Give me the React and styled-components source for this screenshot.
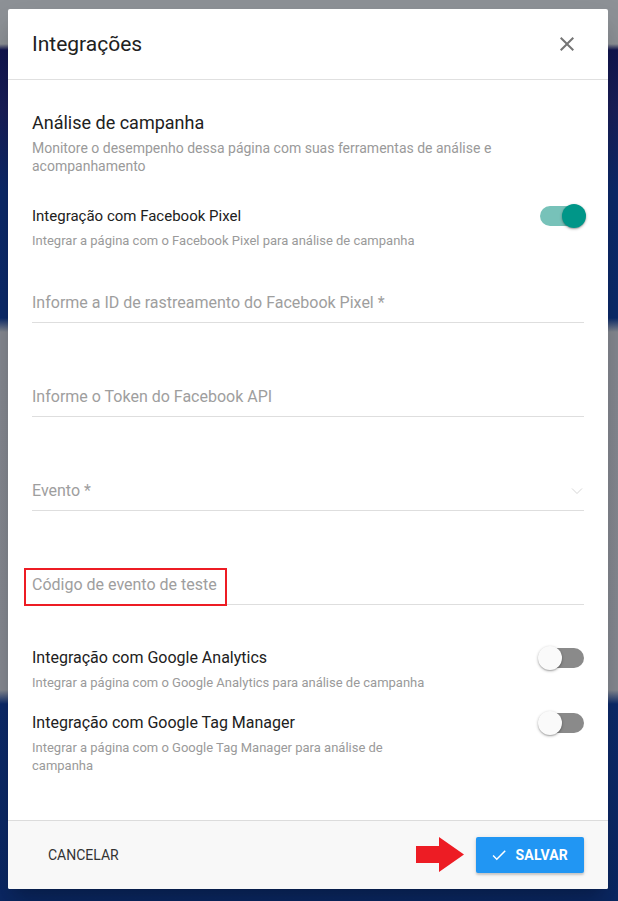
import React, { useState } from "react";
import styled, { createGlobalStyle } from "styled-components";

const GlobalStyle = createGlobalStyle`
  html, body {
    margin: 0;
    padding: 0;
  }
  body {
    font-family: Roboto, "Liberation Sans", Arial, sans-serif;
    min-height: 901px;
    background: linear-gradient(
      180deg,
      #8d9196 0px,
      #8d9196 44px,
      #121650 50px,
      #1a1f5a 110px,
      #0c2a6b 190px,
      #0c2b6c 318px,
      #868a92 332px,
      #878b93 690px,
      #0d2b6b 704px,
      #0b2864 901px
    );
  }
`;

const Page = styled.div`
  padding: 9px 8px 0 8px;
`;

const Modal = styled.div`
  width: 600px;
  background: #fff;
  border-radius: 2px;
  box-shadow: 0 11px 15px -7px rgba(0, 0, 0, 0.2), 0 24px 38px 3px rgba(0, 0, 0, 0.14);
  overflow: hidden;
  display: flex;
  flex-direction: column;
`;

const Header = styled.div`
  height: 70px;
  display: flex;
  align-items: center;
  justify-content: space-between;
  padding: 0 29px 0 24px;
  border-bottom: 1px solid #e0e0e0;
`;

const Title = styled.h2`
  margin: 0;
  font-size: 21px;
  font-weight: 400;
  color: #212121;
`;

const CloseButton = styled.button`
  border: 0;
  background: none;
  padding: 0;
  width: 24px;
  height: 24px;
  display: flex;
  cursor: pointer;
  color: #757575;
`;

const Body = styled.div`
  padding: 31px 24px 45px 24px;
  display: flex;
  flex-direction: column;
`;

const SectionTitle = styled.div`
  font-size: 18px;
  line-height: 24px;
  color: #212121;
`;

const Hint = styled.div`
  margin-top: 4px;
  font-size: ${(p) => (p.$small ? "13px" : "14px")};
  line-height: 18px;
  color: #9a9a9a;
  max-width: ${(p) => (p.$narrow ? "400px" : "none")};
`;

const ToggleBlock = styled.div`
  margin-top: ${(p) => p.$gap}px;
`;

const ToggleHead = styled.div`
  display: flex;
  align-items: center;
  justify-content: space-between;
`;

const ToggleLabel = styled.div`
  font-size: ${(p) => p.$size || 16}px;
  line-height: 24px;
  color: #212121;
`;

const SwitchBox = styled.button`
  position: relative;
  width: 48px;
  height: 24px;
  margin-right: -2px;
  border: 0;
  padding: 0;
  background: none;
  cursor: pointer;
`;

const Track = styled.span`
  position: absolute;
  left: 2px;
  right: 2px;
  top: 2px;
  height: 20px;
  border-radius: 10px;
  background: ${(p) => (p.$on ? "#77c2b9" : "#8a8a8a")};
`;

const Thumb = styled.span`
  position: absolute;
  top: 0;
  left: ${(p) => (p.$on ? "24px" : "0")};
  width: 24px;
  height: 24px;
  border-radius: 50%;
  background: ${(p) => (p.$on ? "#009688" : "#fafafa")};
  box-shadow: 0 1px 3px rgba(0, 0, 0, 0.3), 0 1px 1px rgba(0, 0, 0, 0.14);
`;

const Field = styled.div`
  position: relative;
  margin-top: ${(p) => p.$gap}px;
  display: flex;
  align-items: center;
  justify-content: space-between;
  padding-bottom: 7px;
  border-bottom: 1px solid #dedede;
`;

const FieldLabel = styled.div`
  font-size: 16px;
  line-height: 24px;
  color: #9e9e9e;
`;

const Highlight = styled.div`
  position: absolute;
  left: -8px;
  top: -5px;
  width: 203px;
  height: 38px;
  box-sizing: border-box;
  border: 2px solid #ed1c24;
`;

const Footer = styled.div`
  display: flex;
  align-items: center;
  justify-content: space-between;
  padding: 16px 24px;
  background: #f8f8f8;
  border-top: 1px solid #dcdcdc;
`;

const TextButton = styled.button`
  height: 36px;
  border: 0;
  background: none;
  padding: 0 16px;
  font-family: inherit;
  font-size: 14px;
  font-weight: 400;
  color: #333;
  text-transform: uppercase;
  cursor: pointer;
`;

const Actions = styled.div`
  display: flex;
  align-items: center;
  gap: 12px;
`;

const PrimaryButton = styled.button`
  height: 36px;
  display: flex;
  align-items: center;
  gap: 8px;
  padding: 0 16px 0 14px;
  border: 0;
  border-radius: 2px;
  background: #2196f3;
  color: #fff;
  font-family: inherit;
  font-size: 14px;
  font-weight: 700;
  letter-spacing: 0.2px;
  box-shadow: 0 2px 2px rgba(0, 0, 0, 0.14), 0 1px 5px rgba(0, 0, 0, 0.12);
  cursor: pointer;
`;

const Switch = ({ on, onToggle }) => (
  <SwitchBox onClick={onToggle}>
    <Track $on={on} />
    <Thumb $on={on} />
  </SwitchBox>
);

const Chevron = () => (
  <svg width="12" height="8" viewBox="0 0 12 8" style={{ marginRight: 1 }}>
    <path d="M1 1.5 L6 6.5 L11 1.5" fill="none" stroke="#d6d6d6" strokeWidth="1" />
  </svg>
);

const fields = [
  { label: "Informe a ID de rastreamento do Facebook Pixel *", gap: 41 },
  { label: "Informe o Token do Facebook API", gap: 62 },
  { label: "Evento *", gap: 62, select: true },
  { label: "Código de evento de teste", gap: 62, marked: true },
];

const App = () => {
  const [fb, setFb] = useState(true);
  const [ga, setGa] = useState(false);
  const [gtm, setGtm] = useState(false);

  return (
    <Page>
      <GlobalStyle />
      <Modal>
        <Header>
          <Title>Integrações</Title>
          <CloseButton>
            <svg width="24" height="24" viewBox="0 0 24 24">
              <path
                fill="currentColor"
                d="M19 6.41L17.59 5 12 10.59 6.41 5 5 6.41 10.59 12 5 17.59 6.41 19 12 13.41 17.59 19 19 17.59 13.41 12z"
              />
            </svg>
          </CloseButton>
        </Header>
        <Body>
          <SectionTitle>Análise de campanha</SectionTitle>
          <Hint>Monitore o desempenho dessa página com suas ferramentas de análise e acompanhamento</Hint>

          <ToggleBlock $gap={29}>
            <ToggleHead>
              <ToggleLabel $size={15}>Integração com Facebook Pixel</ToggleLabel>
              <Switch on={fb} onToggle={() => setFb(!fb)} />
            </ToggleHead>
            <Hint $small $narrow>
              Integrar a página com o Facebook Pixel para análise de campanha
            </Hint>
          </ToggleBlock>

          {fields.map((f) => (
            <Field key={f.label} $gap={f.gap}>
              <FieldLabel>{f.label}</FieldLabel>
              {f.select && <Chevron />}
              {f.marked && <Highlight />}
            </Field>
          ))}

          <ToggleBlock $gap={41}>
            <ToggleHead>
              <ToggleLabel>Integração com Google Analytics</ToggleLabel>
              <Switch on={ga} onToggle={() => setGa(!ga)} />
            </ToggleHead>
            <Hint $small $narrow>
              Integrar a página com o Google Analytics para análise de campanha
            </Hint>
          </ToggleBlock>

          <ToggleBlock $gap={19}>
            <ToggleHead>
              <ToggleLabel>Integração com Google Tag Manager</ToggleLabel>
              <Switch on={gtm} onToggle={() => setGtm(!gtm)} />
            </ToggleHead>
            <Hint $small $narrow>
              Integrar a página com o Google Tag Manager para análise de campanha
            </Hint>
          </ToggleBlock>
        </Body>
        <Footer>
          <TextButton>Cancelar</TextButton>
          <Actions>
            <svg width="48" height="36" viewBox="0 0 48 36">
              <polygon points="0,9 23,9 23,0 48,17.5 23,35 23,26 0,26" fill="#ed1c24" />
            </svg>
            <PrimaryButton>
              <svg width="18" height="18" viewBox="0 0 24 24">
                <path fill="currentColor" d="M9 16.17L4.83 12l-1.42 1.41L9 19 21 7l-1.41-1.41z" />
              </svg>
              SALVAR
            </PrimaryButton>
          </Actions>
        </Footer>
      </Modal>
    </Page>
  );
};

export default App;
